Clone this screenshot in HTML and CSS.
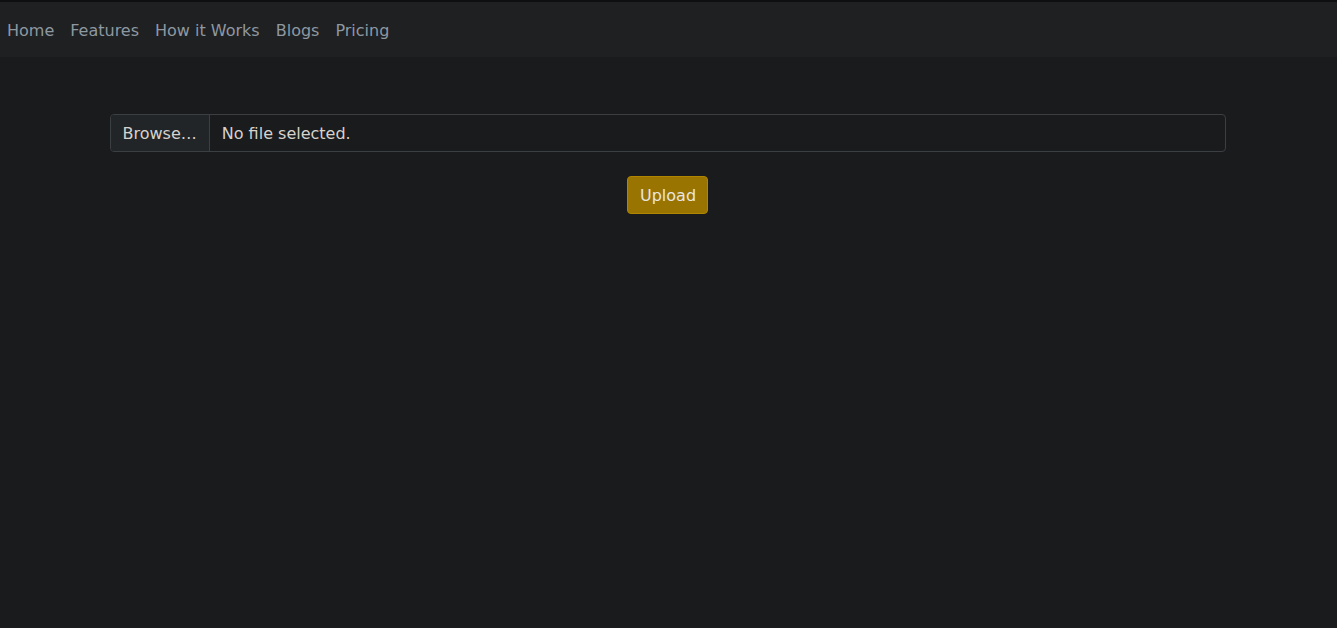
FILE: index.html
```html
<!DOCTYPE html>
<html lang="en">
<head>
    <meta charset="UTF-8">
    <meta name="viewport" content="width=device-width, initial-scale=1.0">
    <title>Upload</title>
    <link rel="stylesheet" href="styles.css">
</head>
<body>
    <nav class="navbar">
        <a class="nav-link" href="#">Home</a>
        <a class="nav-link" href="#">Features</a>
        <a class="nav-link" href="#">How it Works</a>
        <a class="nav-link" href="#">Blogs</a>
        <a class="nav-link" href="#">Pricing</a>
    </nav>

    <div class="container">
        <form class="upload-form">
            <label class="file-input" for="file">
                <span class="file-browse">Browse…</span>
                <span class="file-name">No file selected.</span>
                <input type="file" id="file" class="file-hidden">
            </label>
            <button type="submit" class="btn-upload">Upload</button>
        </form>
    </div>
</body>
</html>
```

FILE: styles.css
```css
html, body {
    height: 100%;
}
body {
    margin: 0;
    background-color: #1a1b1d;
    color: #d6d2cc;
    font-family: "DejaVu Sans", sans-serif;
    font-size: 16px;
    line-height: 1.5;
    border-top: 2px solid #0e0f10;
    box-sizing: border-box;
}
.navbar {
    display: flex;
    align-items: center;
    gap: 16px;
    height: 55px;
    box-sizing: border-box;
    padding: 2px 0 0 7px;
    background-color: #1e2022;
}
.nav-link {
    color: #8e98a1;
    text-decoration: none;
}
.container {
    max-width: 1116px;
    margin: 0 auto;
    padding: 57px 13px 0 11px;
}
.upload-form {
    display: flex;
    flex-direction: column;
    align-items: center;
    gap: 24px;
}
.file-input {
    display: flex;
    width: 100%;
    height: 38px;
    box-sizing: border-box;
    border: 1px solid #3b3f42;
    border-radius: 4px;
    overflow: hidden;
    cursor: pointer;
}
.file-browse {
    display: flex;
    align-items: center;
    padding: 1px 12px 0;
    background-color: #222527;
    border-right: 1px solid #3b3f42;
    color: #d6d2cc;
}
.file-name {
    display: flex;
    align-items: center;
    padding: 1px 12px 0;
    color: #d6d2cc;
}
.file-hidden {
    display: none;
}
.btn-upload {
    background-color: #9a7400;
    border: 1px solid #b08500;
    border-radius: 4px;
    color: #e8e6e3;
    font-family: "DejaVu Sans", sans-serif;
    font-size: 16px;
    line-height: 1.5;
    padding: 7px 11px 5px 12px;
    cursor: pointer;
}
```
